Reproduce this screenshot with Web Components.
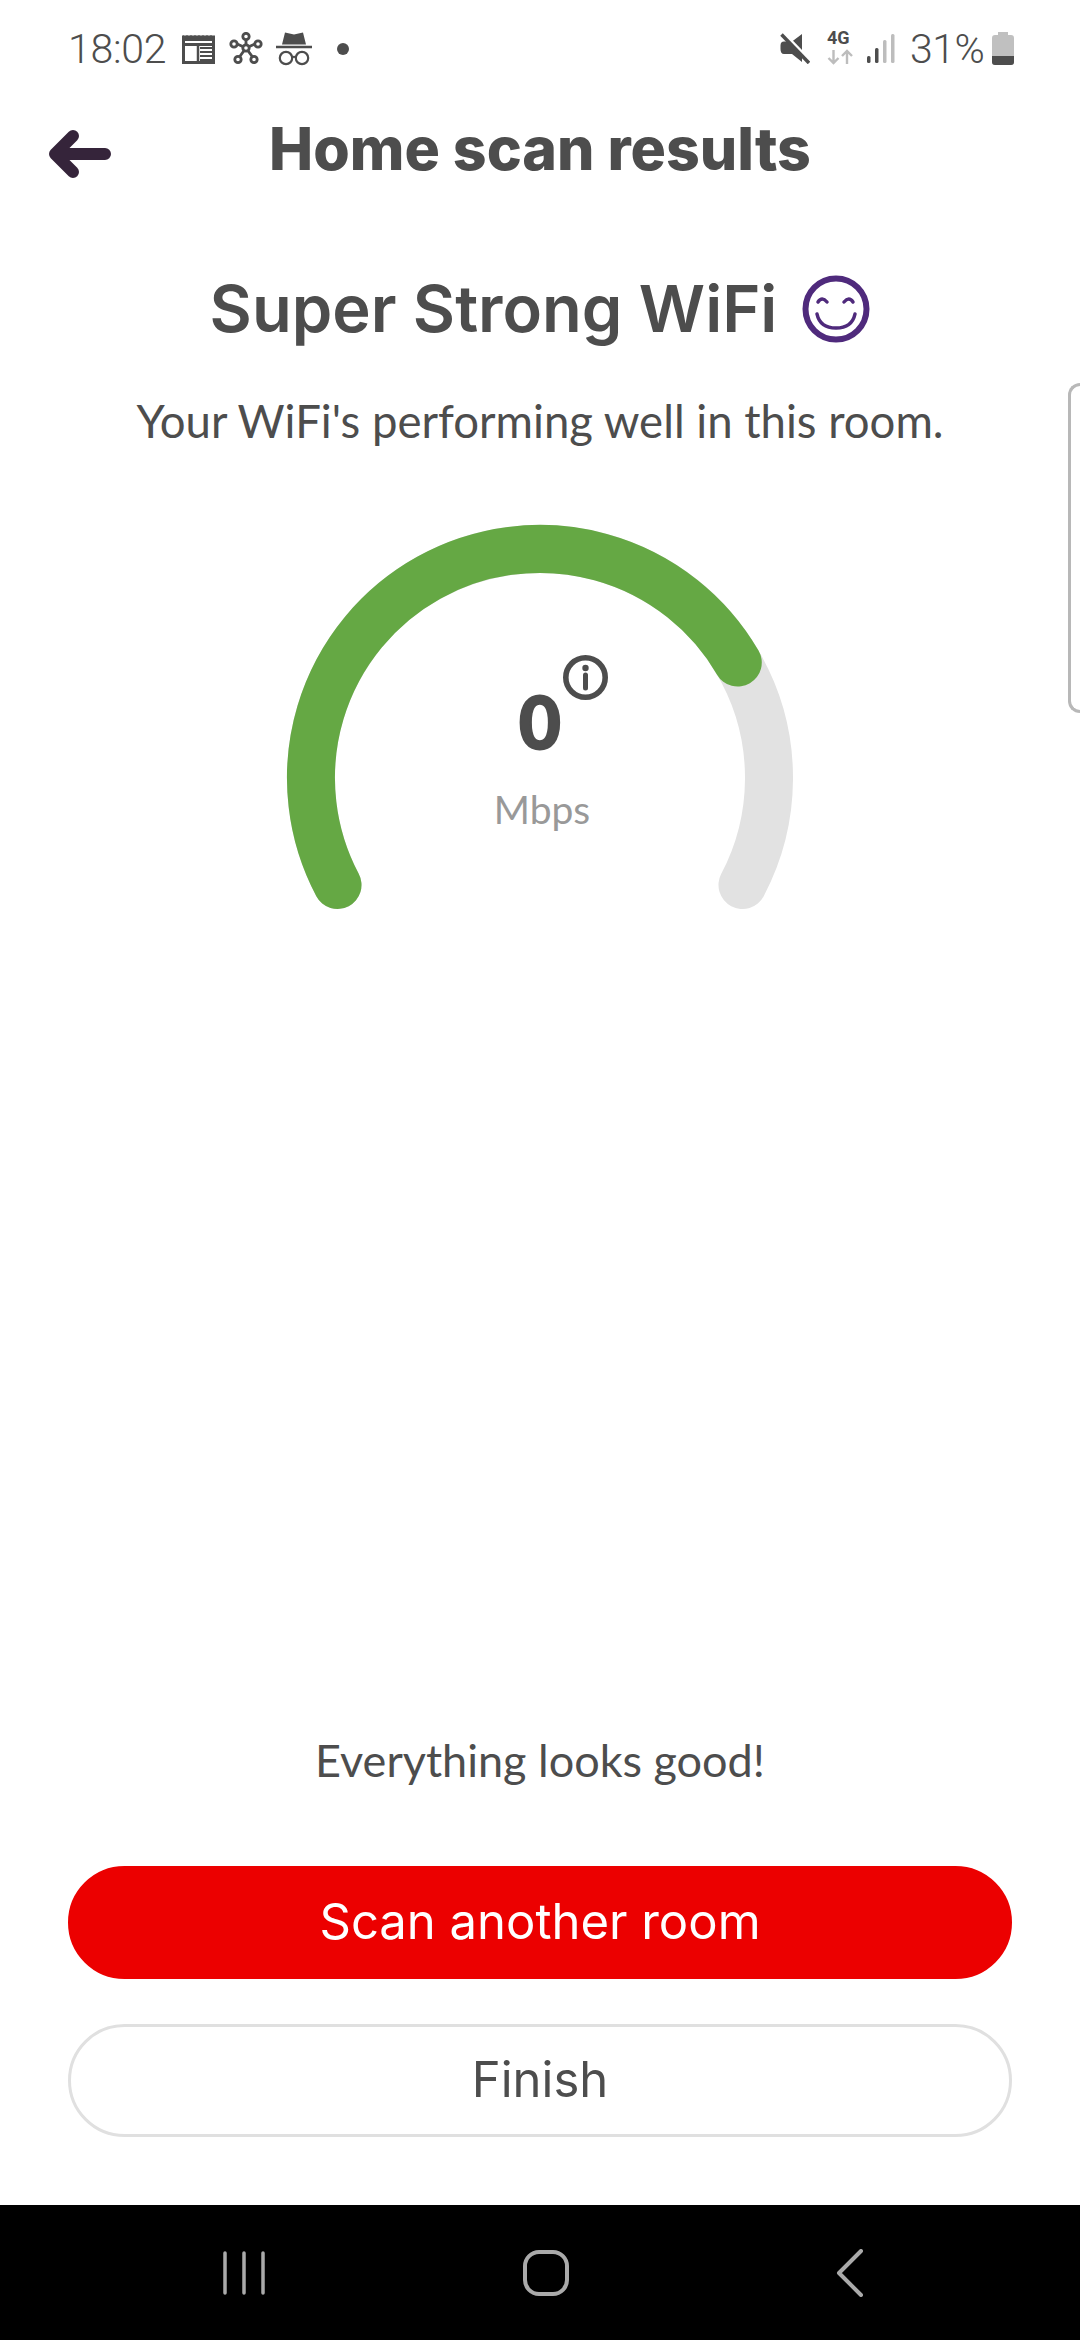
<!DOCTYPE html>
<html lang="en">
<head>
<meta charset="utf-8">
<title>Home scan results</title>
<style>
	html, body { margin: 0; padding: 0; background: #fff; }
	body { width: 1080px; height: 2340px; overflow: hidden; color: #4d4d4d; font-family: "Lato", sans-serif; }
	main { position: relative; display: flex; flex-flow: column nowrap; height: 2340px; }
	.spacer { flex: 1 1 auto; }
</style>
</head>
<body>
<main>
	<status-bar></status-bar>
	<app-header>Home scan results</app-header>
	<scan-summary heading="Super Strong WiFi">Your WiFi's performing well in this room.</scan-summary>
	<speed-gauge value="0" unit="Mbps"></speed-gauge>
	<div class="spacer"></div>
	<scan-actions>
		<span slot="message">Everything looks good!</span>
		<pill-button kind="primary">Scan another room</pill-button>
		<pill-button>Finish</pill-button>
	</scan-actions>
	<nav-bar></nav-bar>
	<side-handle></side-handle>
</main>
<script>
class StatusBar extends HTMLElement {
	connectedCallback() {
		this.attachShadow({ mode: "open" });
		this.shadowRoot.innerHTML = `
			<style>
				:host {
					display: flex;
					align-items: center;
					box-sizing: border-box;
					height: 100px;
					padding: 0 66px 3px 68px;
					color: #4d4d4d;
					font-family: "Roboto", sans-serif;
					font-weight: 300;
					font-size: 41px;
				}
				svg { display: block; flex: none; }
				.left, .right { display: flex; align-items: center; }
				.spacer { flex: 1 1 auto; }
				.time { width: 114px; letter-spacing: -0.3px; }
				.pct { margin-left: 15px; width: 82px; letter-spacing: -0.5px; }
				.net { position: relative; width: 27px; height: 34px; margin-left: 17px; }
				.net b {
					position: absolute; left: 0; top: -3px; font: 700 18px/18px "Roboto", sans-serif; color: #4d4d4d;
				}
				.net svg { position: absolute; left: 0; top: 17px; }
			</style>
			<div class="left">
				<span class="time">18:02</span>
				<svg width="33" height="30" viewBox="0 0 33 30">
					<path d="M1 1l2 2 2-2 2 2 2-2 2 2 2-2 2 2 2-2 2 2 2-2 2 2 2-2 2 2 2-2 2 2 0 4H1z" fill="#4d4d4d"/>
					<rect x="1.500" y="3" width="30" height="25.500" fill="none" stroke="#4d4d4d" stroke-width="3"/>
					<path d="M2 10.500h29" stroke="#4d4d4d" stroke-width="3"/>
					<path d="M16 12v16" stroke="#4d4d4d" stroke-width="2.500"/>
					<path d="M18 14h12M18 18h12M18 22h12M18 26h12" stroke="#4d4d4d" stroke-width="2"/>
				</svg>
				<svg width="34" height="33" viewBox="0 0 34 33" style="margin-left:14px" fill="none" stroke="#4d4d4d" stroke-width="2.800">
					<path d="M17 6v10M6 11l11 5 11-5M9 27l8-11 8 11"/>
					<circle cx="17" cy="4.500" r="3.200" fill="#fff"/>
					<circle cx="5" cy="12" r="3.200" fill="#fff"/>
					<circle cx="29" cy="12" r="3.200" fill="#fff"/>
					<circle cx="9" cy="27.500" r="3.200" fill="#fff"/>
					<circle cx="25" cy="27.500" r="3.200" fill="#fff"/>
					<circle cx="17" cy="16" r="3.200" fill="#fff"/>
				</svg>
				<svg width="36" height="34" viewBox="0 0 36 34" style="margin-left:13px">
					<path d="M9 0.500l9 2 9-2 3 12H6z" fill="#4d4d4d"/>
					<path d="M0 15h36" stroke="#4d4d4d" stroke-width="2.600"/>
					<circle cx="10" cy="26" r="6.200" fill="none" stroke="#4d4d4d" stroke-width="2.200"/>
					<circle cx="26" cy="26" r="6.200" fill="none" stroke="#4d4d4d" stroke-width="2.200"/>
					<path d="M16 25.500q2-1.400 4 0" fill="none" stroke="#4d4d4d" stroke-width="2"/>
				</svg>
				<svg width="12" height="12" viewBox="0 0 12 12" style="margin-left:25px"><circle cx="6" cy="6" r="6" fill="#4d4d4d"/></svg>
			</div>
			<div class="spacer"></div>
			<div class="right">
				<svg width="30" height="31" viewBox="0 0 30 31">
					<path d="M22 1v28L12 21H4Q0.500 21 0.500 16V12.500Q0.500 8.500 4 8.500h8z" fill="#4d4d4d"/>
					<path d="M4.500 1l26 27" stroke="#fff" stroke-width="3"/>
					<path d="M1.500 1.500l27.500 28.500" stroke="#4d4d4d" stroke-width="3.500"/>
				</svg>
				<div class="net">
					<b>4G</b>
					<svg width="27" height="16" viewBox="0 0 27 16" fill="none" stroke="#bdbdbd" stroke-width="2.400">
						<path d="M6.500 1v13M1.500 9l5 5 5-5"/>
						<path d="M20 15V2M15 7l5-5 5 5"/>
					</svg>
				</div>
				<svg width="28" height="30" viewBox="0 0 28 30" style="margin-left:13px">
					<rect x="0" y="22" width="3.500" height="7" rx="1.500" fill="#4d4d4d"/>
					<rect x="8" y="14" width="3.500" height="15" rx="1.500" fill="#4d4d4d"/>
					<rect x="16" y="6" width="3.500" height="23" rx="1.500" fill="#bdbdbd"/>
					<rect x="24" y="0" width="3.500" height="29" rx="1.500" fill="#bdbdbd"/>
				</svg>
				<span class="pct">31%</span>
				<svg width="22" height="33" viewBox="0 0 22 33">
					<path d="M6 0h10v3h3q3 0 3 3v24q0 3-3 3H3q-3 0-3-3V6q0-3 3-3h3z" fill="#c0c0c0"/>
					<path d="M0 24h22v6q0 3-3 3H3q-3 0-3-3z" fill="#4d4d4d"/>
				</svg>
			</div>
		`;
	}
}

class AppHeader extends HTMLElement {
	connectedCallback() {
		this.attachShadow({ mode: "open" });
		this.shadowRoot.innerHTML = `
			<style>
				:host {
					display: flex;
					align-items: center;
					justify-content: center;
					position: relative;
					box-sizing: border-box;
					height: 100px;
					padding-bottom: 2px;
					color: #4d4d4d;
					font: 800 59px/98px "Inter", sans-serif;
				}
				.title { display: block; white-space: nowrap; }
				svg { position: absolute; left: 49px; top: 30px; }
			</style>
			<svg width="62" height="48" viewBox="0 0 62 48" fill="none" stroke="#35243a" stroke-width="12" stroke-linecap="round" stroke-linejoin="round">
				<path d="M56 24H8M24 6L6 24l18 18"/>
			</svg>
			<span class="title"><slot></slot></span>
		`;
	}
}

class ScanSummary extends HTMLElement {
	connectedCallback() {
		this.attachShadow({ mode: "open" });
		this.shadowRoot.innerHTML = `
			<style>
				:host {
					display: flex;
					flex-flow: column nowrap;
					align-items: center;
					color: #4d4d4d;
				}
				.heading { display: flex; align-items: center; gap: 25px; height: 80px; margin-top: 69px; }
				h1 { margin: 0; font: 600 65px/80px "Inter", sans-serif; white-space: nowrap; }
				p { margin: 44px 0 0; font: 400 45.500px/56px "Lato", sans-serif; white-space: nowrap; }
			</style>
			<div class="heading">
				<h1></h1>
				<svg width="68" height="68" viewBox="0 0 68 68" fill="none" stroke="#4f2a7c" stroke-linecap="round">
					<circle cx="34" cy="34" r="30.500" stroke-width="6"/>
					<path d="M16 27q4-6 9 0M42 27q5-6 9 0" stroke-width="3.500"/>
					<path d="M15 39q3 14 19 14t19-14" stroke-width="3.500"/>
				</svg>
			</div>
			<p><slot></slot></p>
		`;
		this.shadowRoot.querySelector("h1").textContent = this.getAttribute("heading");
	}
}

function degreesToRadians(deg) {
	return deg * (Math.PI / 180);
}

// angle is measured from 12 o'clock, clockwise
function arcPath(cx, cy, r, startDeg, endDeg) {
	const point = deg => {
		const rad = degreesToRadians(deg);
		return `${(cx + r * Math.sin(rad)).toFixed(2)} ${(cy - r * Math.cos(rad)).toFixed(2)}`;
	};
	const large = endDeg - startDeg > 180 ? 1 : 0;
	return `M${point(startDeg)}A${r} ${r} 0 ${large} 1 ${point(endDeg)}`;
}

class SpeedGauge extends HTMLElement {
	connectedCallback() {
		this.attachShadow({ mode: "open" });
		this.shadowRoot.innerHTML = `
			<style>
				:host {
					display: block;
					position: relative;
					width: 520px;
					height: 400px;
					margin: 61px auto 0;
				}
				svg { display: block; }
				.value {
					position: absolute; left: 0; right: 0; top: 176px; text-align: center;
					color: #4d4d4d; font: 900 72px/70px "Lato", sans-serif;
					-webkit-text-stroke: 2px #4d4d4d;
				}
				.unit {
					position: absolute; left: 0; right: 0; top: 277px; text-align: center; padding-left: 4px;
					color: #999; font: 400 39px/44px "Lato", sans-serif;
				}
				.info { position: absolute; left: 283px; top: 145px; }
			</style>
			<svg width="520" height="400" viewBox="0 0 520 400" fill="none" stroke-width="48" stroke-linecap="round">
				<path id="track" stroke="#e2e2e2"/>
				<path id="fill" stroke="#65a844"/>
			</svg>
			<div class="value"></div>
			<svg class="info" width="45" height="45" viewBox="0 0 45 45">
				<circle cx="22.500" cy="22.500" r="19.700" fill="#fff" stroke="#4d4d4d" stroke-width="5.600"/>
				<circle cx="22.500" cy="13" r="3.200" fill="#4d4d4d"/>
				<path d="M22.500 20v13" stroke="#4d4d4d" stroke-width="5" stroke-linecap="round"/>
			</svg>
			<div class="unit"></div>
		`;
		this.shadowRoot.querySelector("#track").setAttribute("d", arcPath(260, 268, 229, -117.85, 117.85));
		this.shadowRoot.querySelector("#fill").setAttribute("d", arcPath(260, 268, 229, -117.85, 59.73));
		this.shadowRoot.querySelector(".value").textContent = this.getAttribute("value");
		this.shadowRoot.querySelector(".unit").textContent = this.getAttribute("unit");
	}
}

class ScanActions extends HTMLElement {
	connectedCallback() {
		this.attachShadow({ mode: "open" });
		this.shadowRoot.innerHTML = `
			<style>
				:host {
					display: flex;
					flex-flow: column nowrap;
					gap: 45px;
					padding: 0 68px 68px;
				}
				.message {
					margin-bottom: 33px; text-align: center; color: #4d4d4d;
					font: 400 45px/56px "Lato", sans-serif;
				}
			</style>
			<div class="message"><slot name="message"></slot></div>
			<slot></slot>
		`;
	}
}

class PillButton extends HTMLElement {
	connectedCallback() {
		this.attachShadow({ mode: "open" });
		this.shadowRoot.innerHTML = `
			<style>
				:host {
					display: flex;
					align-items: center;
					justify-content: center;
					box-sizing: border-box;
					height: 113px;
					padding-bottom: 3px;
					border-radius: 57px;
					border: 3px solid #e0e0e0;
					background: #fff;
					color: #4d4d4d;
					font: 400 49px/1 "Inter", sans-serif;
				}
				:host([kind="primary"]) { border-color: #ec0000; background: #ec0000; color: #fff; }
				span { display: block; white-space: nowrap; }
			</style>
			<span><slot></slot></span>
		`;
	}
}

class NavBar extends HTMLElement {
	connectedCallback() {
		this.attachShadow({ mode: "open" });
		this.shadowRoot.innerHTML = `
			<style>
				:host {
					display: grid;
					grid-template-columns: 488px 116px 476px;
					align-items: center;
					height: 135px;
					background: #000;
				}
				svg { display: block; justify-self: center; }
				.back { justify-self: start; margin-left: 231px; }
			</style>
			<svg width="44" height="44" viewBox="0 0 44 44" fill="none" stroke="#aaa" stroke-width="3.500" stroke-linecap="round">
				<path d="M3 2v40M22 2v40M41 2v40"/>
			</svg>
			<svg width="46" height="46" viewBox="0 0 46 46" fill="none" stroke="#aaa" stroke-width="4">
				<rect x="2" y="2" width="42" height="42" rx="14"/>
			</svg>
			<svg class="back" width="30" height="48" viewBox="0 0 30 48" fill="none" stroke="#aaa" stroke-width="4" stroke-linecap="round" stroke-linejoin="round">
				<path d="M26 2L4 24l22 22"/>
			</svg>
		`;
	}
}

// the edge panel handle that Samsung overlays on the right of the screen
class SideHandle extends HTMLElement {
	connectedCallback() {
		this.attachShadow({ mode: "open" });
		this.shadowRoot.innerHTML = `
			<style>
				:host {
					position: absolute;
					right: 0;
					top: 383px;
					box-sizing: border-box;
					width: 12px;
					height: 330px;
					border: 3px solid #b8b8b8;
					border-right: 0;
					border-radius: 14px 0 0 14px;
				}
			</style>
		`;
	}
}

customElements.define("status-bar", StatusBar);
customElements.define("app-header", AppHeader);
customElements.define("scan-summary", ScanSummary);
customElements.define("speed-gauge", SpeedGauge);
customElements.define("scan-actions", ScanActions);
customElements.define("pill-button", PillButton);
customElements.define("nav-bar", NavBar);
customElements.define("side-handle", SideHandle);
</script>
</body>
</html>
